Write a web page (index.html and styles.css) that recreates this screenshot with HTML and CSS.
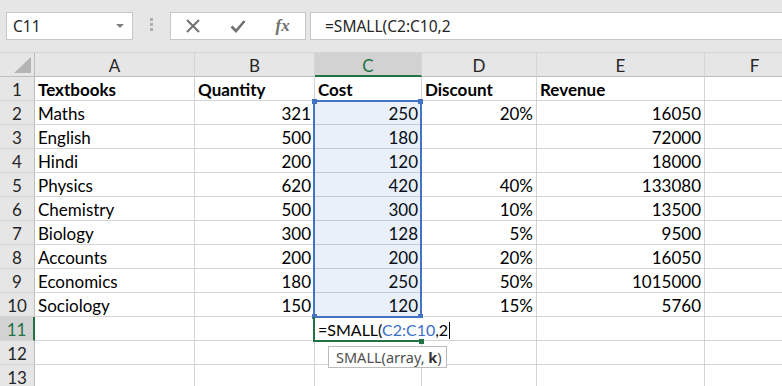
FILE: index.html
```html
<!DOCTYPE html>
<html lang="en">
<head>
    <meta charset="UTF-8">
    <meta name="viewport" content="width=device-width, initial-scale=1.0">
    <title>SMALL function</title>
    <link rel="stylesheet" href="styles.css">
</head>
<body>
    <div class="toolbar">
        <div class="name-box">
            <span>C11</span>
            <span class="caret"></span>
        </div>
        <div class="grip"><i></i><i></i><i></i></div>
        <div class="fx-buttons">
            <svg width="16" height="16" viewBox="0 0 16 16"><path d="M2 2 L14 14 M14 2 L2 14" stroke="#707070" stroke-width="2" fill="none"/></svg>
            <svg width="16" height="16" viewBox="0 0 16 16"><path d="M1.5 8.5 L6 13 L14.5 3" stroke="#707070" stroke-width="2.6" fill="none"/></svg>
            <span class="fx">fx</span>
        </div>
        <div class="formula-bar">=SMALL(C2:C10,2</div>
    </div>

    <div class="sheet">
        <div class="grid">
            <div class="corner"><svg width="17" height="16" viewBox="0 0 17 16"><polygon points="0,16 17,16 17,0" fill="#b4b4b4"/></svg></div>
            <div class="col-head">A</div>
            <div class="col-head">B</div>
            <div class="col-head current">C</div>
            <div class="col-head">D</div>
            <div class="col-head">E</div>
            <div class="col-head">F</div>

            <div class="row-head">1</div>
            <div class="cell bold">Textbooks</div>
            <div class="cell bold">Quantity</div>
            <div class="cell bold">Cost</div>
            <div class="cell bold">Discount</div>
            <div class="cell bold">Revenue</div>
            <div class="cell"></div>

            <div class="row-head">2</div>
            <div class="cell">Maths</div>
            <div class="cell num">321</div>
            <div class="cell num">250</div>
            <div class="cell num">20%</div>
            <div class="cell num">16050</div>
            <div class="cell"></div>

            <div class="row-head">3</div>
            <div class="cell">English</div>
            <div class="cell num">500</div>
            <div class="cell num">180</div>
            <div class="cell num"></div>
            <div class="cell num">72000</div>
            <div class="cell"></div>

            <div class="row-head">4</div>
            <div class="cell">Hindi</div>
            <div class="cell num">200</div>
            <div class="cell num">120</div>
            <div class="cell num"></div>
            <div class="cell num">18000</div>
            <div class="cell"></div>

            <div class="row-head">5</div>
            <div class="cell">Physics</div>
            <div class="cell num">620</div>
            <div class="cell num">420</div>
            <div class="cell num">40%</div>
            <div class="cell num">133080</div>
            <div class="cell"></div>

            <div class="row-head">6</div>
            <div class="cell">Chemistry</div>
            <div class="cell num">500</div>
            <div class="cell num">300</div>
            <div class="cell num">10%</div>
            <div class="cell num">13500</div>
            <div class="cell"></div>

            <div class="row-head">7</div>
            <div class="cell">Biology</div>
            <div class="cell num">300</div>
            <div class="cell num">128</div>
            <div class="cell num">5%</div>
            <div class="cell num">9500</div>
            <div class="cell"></div>

            <div class="row-head">8</div>
            <div class="cell">Accounts</div>
            <div class="cell num">200</div>
            <div class="cell num">200</div>
            <div class="cell num">20%</div>
            <div class="cell num">16050</div>
            <div class="cell"></div>

            <div class="row-head">9</div>
            <div class="cell">Economics</div>
            <div class="cell num">180</div>
            <div class="cell num">250</div>
            <div class="cell num">50%</div>
            <div class="cell num">1015000</div>
            <div class="cell"></div>

            <div class="row-head">10</div>
            <div class="cell">Sociology</div>
            <div class="cell num">150</div>
            <div class="cell num">120</div>
            <div class="cell num">15%</div>
            <div class="cell num">5760</div>
            <div class="cell"></div>

            <div class="row-head current">11</div>
            <div class="cell"></div>
            <div class="cell"></div>
            <div class="cell"></div>
            <div class="cell"></div>
            <div class="cell"></div>
            <div class="cell"></div>

            <div class="row-head">12</div>
            <div class="cell"></div>
            <div class="cell"></div>
            <div class="cell"></div>
            <div class="cell"></div>
            <div class="cell"></div>
            <div class="cell"></div>

            <div class="row-head">13</div>
            <div class="cell"></div>
            <div class="cell"></div>
            <div class="cell"></div>
            <div class="cell"></div>
            <div class="cell"></div>
            <div class="cell"></div>
        </div>

        <!-- C2:C10 reference highlight -->
        <div class="range">
            <i class="handle tl"></i><i class="handle tr"></i>
            <i class="handle bl"></i><i class="handle br"></i>
        </div>

        <!-- C11 in edit mode -->
        <div class="editor">=SMALL(<span class="ref">C2:C10</span>,2<span class="caret-line"></span></div>
        <div class="active"><i class="fill-handle"></i></div>

        <div class="tooltip">SMALL(array, <b>k</b>)</div>
    </div>
</body>
</html>
```

FILE: styles.css
```css
/* General Reset */
* {
    margin: 0;
    padding: 0;
    box-sizing: border-box;
}

body {
    width: 782px;
    height: 386px;
    overflow: hidden;
    background: #fff;
    font-family: 'Lato', 'Noto Sans', sans-serif;
    color: #000;
}

/* Formula toolbar */
.toolbar {
    height: 52px;
    background: #e6e6e6;
    display: flex;
    align-items: flex-start;
    padding-top: 12px;
    font-family: 'Noto Sans', 'Open Sans', sans-serif;
    font-size: 15.5px;
    color: #262626;
}

.name-box {
    margin-left: 6px;
    width: 127px;
    height: 28px;
    background: #fff;
    border: 1px solid #c6c6c6;
    display: flex;
    align-items: center;
    justify-content: space-between;
    padding: 0 8px 0 6px;
}

.caret {
    width: 0;
    height: 0;
    border-left: 4px solid transparent;
    border-right: 4px solid transparent;
    border-top: 4px solid #808080;
}

.grip {
    width: 37px;
    height: 28px;
    display: flex;
    flex-direction: column;
    align-items: center;
    gap: 2px;
    padding-top: 6px;
}

.grip i {
    width: 3px;
    height: 3px;
    background: #b0b0b0;
}

.fx-buttons {
    width: 136px;
    height: 28px;
    background: #fff;
    border: 1px solid #c6c6c6;
    display: flex;
    align-items: center;
    justify-content: space-around;
}

.fx {
    font-family: 'Liberation Serif', serif;
    font-style: italic;
    font-weight: bold;
    font-size: 17px;
    color: #707070;
    width: 16px;
    text-align: center;
}

.formula-bar {
    margin-left: 4px;
    flex: 1;
    height: 28px;
    margin-right: -10px;
    background: #fff;
    border: 1px solid #c6c6c6;
    padding-left: 14px;
    line-height: 26px;
}

/* Sheet */
.sheet {
    position: relative;
    border-top: 1px solid #d4d4d4;
}

.grid {
    display: grid;
    grid-template-columns: 35px 160px 120px 107px 115px 168px 100px;
    grid-auto-rows: 24px;
}

.grid > div {
    border-right: 1px solid #d4d4d4;
    border-bottom: 1px solid #d4d4d4;
    font-size: 17px;
    line-height: 21px;
    padding-top: 2px;
    white-space: nowrap;
    overflow: hidden;
}

.corner, .col-head, .row-head {
    background: #e6e6e6;
    color: #262626;
}

.corner {
    position: relative;
    border-right-color: #bdbdbd !important;
    border-bottom-color: #bdbdbd !important;
}

.corner svg {
    position: absolute;
    right: 3px;
    bottom: 3px;
}

.col-head {
    text-align: center;
    border-bottom-color: #bdbdbd !important;
}

.row-head {
    text-align: center;
    border-right-color: #bdbdbd !important;
}

.col-head.current {
    background: #d2d2d2;
    color: #217346;
    border-bottom: 2px solid #217346 !important;
}

.row-head.current {
    background: #d2d2d2;
    color: #217346;
    border-right: 2px solid #217346 !important;
}

.cell {
    padding-left: 3px;
    padding-right: 3px;
}

.cell.num {
    text-align: right;
}

.cell.bold {
    font-weight: bold;
}

/* Highlighted argument range C2:C10 */
.range {
    position: absolute;
    left: 313px;
    top: 47px;
    width: 109px;
    height: 218px;
    border: 2px solid #4472c4;
    background: rgba(68, 114, 196, 0.11);
}

.handle {
    position: absolute;
    width: 5px;
    height: 5px;
    background: #4472c4;
}

.handle.tl { left: -3px; top: -3px; }
.handle.tr { right: -3px; top: -3px; }
.handle.bl { left: -3px; bottom: -3px; }
.handle.br { right: -3px; bottom: -3px; }

/* Cell being edited */
.editor {
    position: absolute;
    left: 315px;
    top: 265px;
    width: 140px;
    height: 22px;
    background: #fff;
    font-size: 16px;
    line-height: 20px;
    padding: 2px 0 0 3px;
    white-space: nowrap;
}

.editor .ref {
    color: #3c6fc6;
}

.caret-line {
    display: inline-block;
    width: 1px;
    height: 17px;
    background: #000;
    vertical-align: -3px;
    margin-left: 1px;
}

.active {
    position: absolute;
    left: 313px;
    top: 264px;
    width: 106px;
    height: 25px;
    border-left: 2px solid #217346;
    border-bottom: 2px solid #217346;
}

.fill-handle {
    position: absolute;
    right: -5px;
    bottom: -4px;
    width: 5px;
    height: 5px;
    background: #217346;
}

.tooltip {
    position: absolute;
    left: 328px;
    top: 293px;
    width: 119px;
    height: 22px;
    background: #fff;
    border: 1px solid #bcbcbc;
    font-family: 'Noto Sans', 'Open Sans', sans-serif;
    font-size: 14.5px;
    line-height: 20px;
    color: #505050;
    padding-left: 7px;
    white-space: nowrap;
}

.tooltip b {
    color: #333;
}
```
